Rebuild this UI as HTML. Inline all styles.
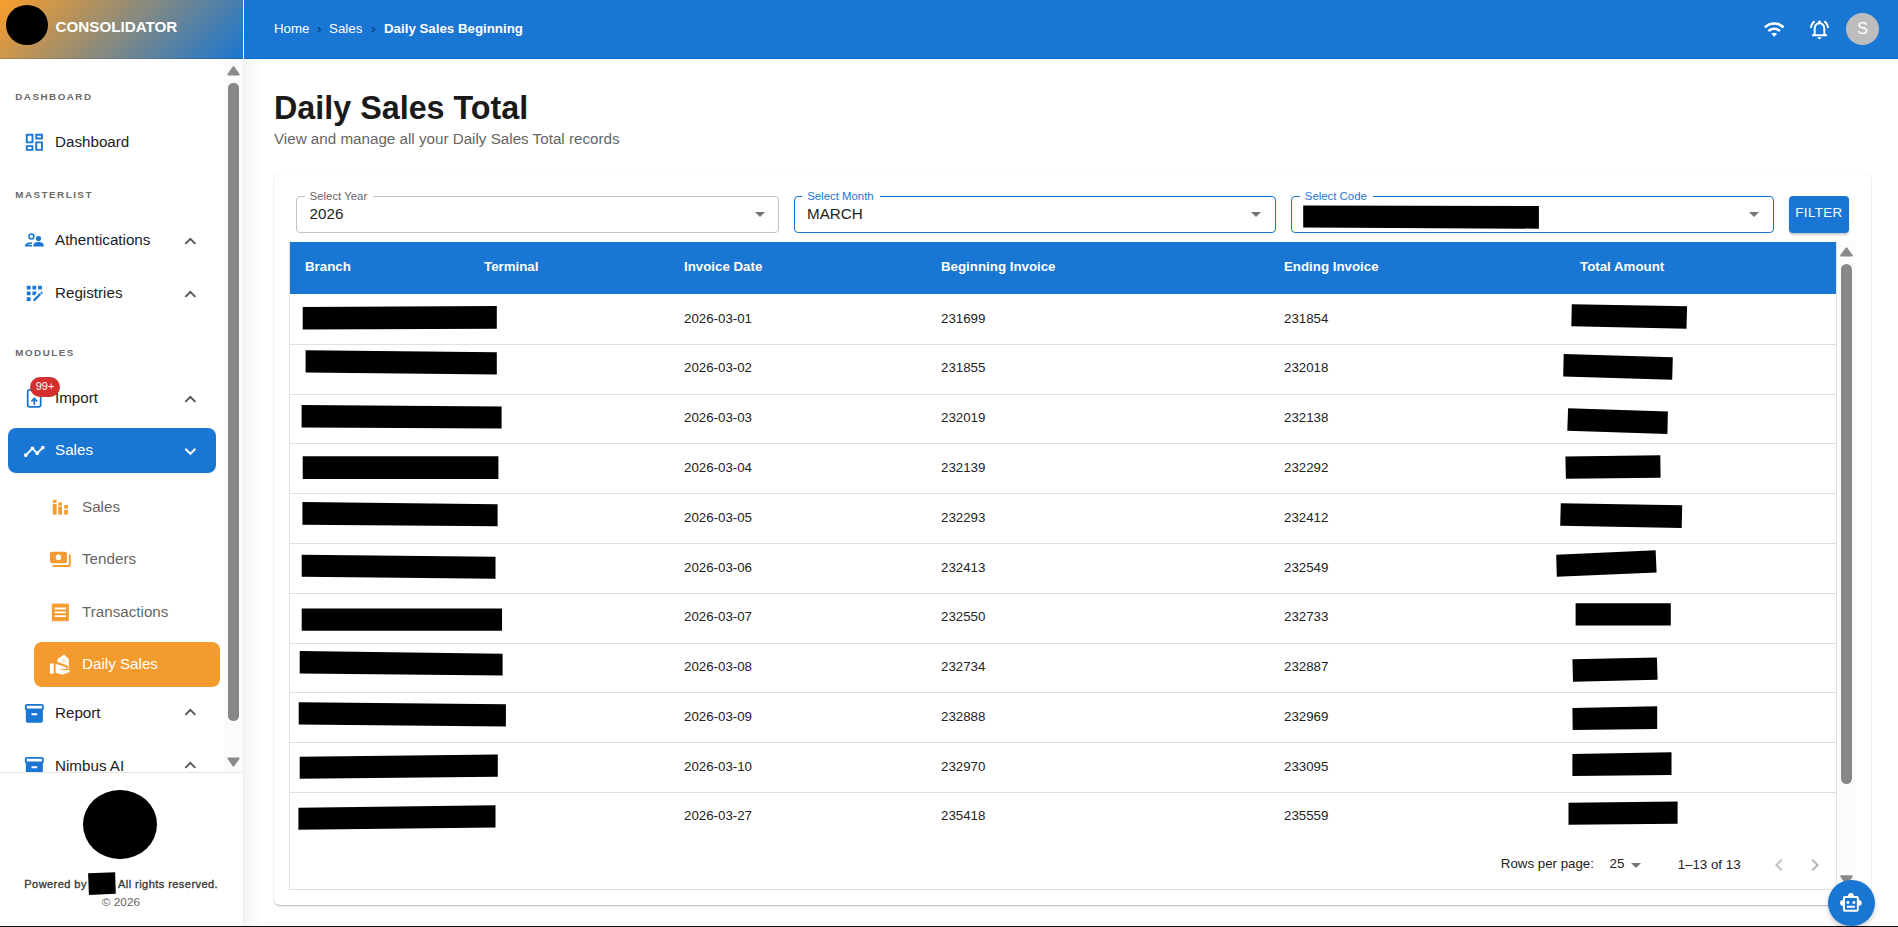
<!DOCTYPE html>
<html><head><meta charset="utf-8">
<style>
*{box-sizing:border-box;margin:0;padding:0}
html,body{width:1898px;height:927px;overflow:hidden;background:#fff;font-family:"Liberation Sans",sans-serif;color:#222}
.abs{position:absolute}
svg{display:block}
#sbhead{left:0;top:0;width:243px;height:59px;background:linear-gradient(135deg,#f89e2a 0%,#1976d2 100%);box-shadow:inset 0 -1px 0 rgba(0,0,0,.12)}
#topbar{left:244px;top:0;width:1654px;height:59px;background:#1976d2;box-shadow:inset 0 -1px 0 #0867cb}
#sbline{left:243px;top:0;width:1px;height:927px;background:#e6effa}
#sidebar{left:0;top:59px;width:243px;height:868px;background:#fff}
.lbl{position:absolute;left:15.3px;font-size:9.8px;font-weight:bold;letter-spacing:1.5px;color:#6a6a6a;line-height:12px}
.item{position:absolute;left:55px;font-size:15.2px;color:#222;line-height:18px;white-space:nowrap}
.sub{position:absolute;left:82px;font-size:15.2px;color:#666;line-height:18px;white-space:nowrap}
.ico{position:absolute;width:22.7px;height:22.7px}
.chev{position:absolute;left:179px;width:22.7px;height:22.7px}
#main{left:244px;top:59px;width:1654px;height:868px;background:linear-gradient(90deg,#f4f4f4 0,#fafafa 8px,#fff 18px)}
.hd{position:absolute;top:259.2px;font-size:13.3px;font-weight:bold;color:#fff;line-height:16px;white-space:nowrap}
.cell{position:absolute;font-size:13.3px;color:#222;line-height:16px;white-space:nowrap}
.hline{position:absolute;left:290px;width:1546px;height:1px;background:#e0e0e0}
.slbl{position:absolute;font-size:11.4px;line-height:13px;background:#fff;padding:0 6px 0 4.8px;white-space:nowrap}
.sval{position:absolute;font-size:15.2px;line-height:18px;color:#222}
.sel{position:absolute;top:196px;height:37px;border:1px solid #c4c4c4;border-radius:4px}
.arr{position:absolute;width:0;height:0;border-left:5px solid transparent;border-right:5px solid transparent;border-top:5px solid #757575}
</style></head><body>
<div class="abs" id="sidebar"></div>
<div class="abs" id="main"></div>
<div class="abs" id="sbhead"></div>
<div class="abs" id="topbar"></div>
<div class="abs" id="sbline"></div>

<!-- logo -->
<div class="abs" style="left:6px;top:5px;width:42px;height:40px;border-radius:50%;background:#000"></div>
<div class="abs" style="left:55.5px;top:18px;font-size:15.2px;font-weight:bold;color:#fff;line-height:18px">CONSOLIDATOR</div>

<!-- breadcrumb -->
<div class="abs" style="left:274px;top:20px;font-size:13.3px;color:#fff;line-height:17px;white-space:nowrap">Home<span style="color:#0d3460;margin:0 7.6px">›</span>Sales<span style="color:#0d3460;margin:0 8.4px 0 8.8px">›</span><b>Daily Sales Beginning</b></div>

<!-- top right icons -->
<svg class="abs" style="left:1762.6px;top:17.8px" width="22.4" height="22.4" viewBox="0 0 24 24" fill="#fff"><path d="M1 9l2 2c4.97-4.97 13.03-4.97 18 0l2-2C16.93 2.93 7.08 2.93 1 9zm8 8l3 3 3-3c-1.65-1.66-4.34-1.66-6 0zm-4-4l2 2c2.76-2.76 7.24-2.76 10 0l2-2C15.14 9.14 8.87 9.14 5 13z"/></svg>
<svg class="abs" style="left:1807.7px;top:17.6px" width="23" height="23" viewBox="0 0 24 24" fill="#fff"><path d="M18 16v-5c0-3.07-1.64-5.64-4.5-6.32V4c0-.83-.67-1.5-1.5-1.5s-1.5.67-1.5 1.5v.68C7.63 5.36 6 7.92 6 11v5l-2 2v1h16v-1l-2-2zm-2 1H8v-6c0-2.480 1.51-4.5 4-4.5s4 2.02 4 4.5v6zm-4 5c1.1 0 2-.9 2-2h-4c0 1.1.89 2 2 2zM7.58 4.08 6.17 2.670C3.77 4.5 2.19 7.32 2.05 10.5h2c.15-2.65 1.51-4.97 3.530-6.420zm12.37 6.420h2c-.15-3.18-1.730-6-4.12-7.83l-1.4 1.410c2 1.45 3.37 3.77 3.52 6.42z"/></svg>
<div class="abs" style="left:1846px;top:13px;width:33px;height:32px;border-radius:50%;background:#bdbdbd;color:#fff;font-size:16px;line-height:32px;text-align:center">S</div>

<!-- sidebar scrollbar -->
<div class="abs" style="left:224px;top:59px;width:19px;height:713px;background:#fbfbfb"></div>
<div class="abs" style="left:228px;top:83px;width:10.8px;height:637.5px;border-radius:5px;background:#888"></div>
<svg class="abs" style="left:220px;top:60px" width="26" height="20"><polygon points="233.5,7 238.8,14.6 228.3,14.6" transform="translate(-220,0)" fill="#8a8a8a" stroke="#8a8a8a" stroke-width="1.8" stroke-linejoin="round"/></svg>
<svg class="abs" style="left:220px;top:750px" width="26" height="20"><polygon points="228.3,8.3 238.8,8.3 233.5,15.8" transform="translate(-220,0)" fill="#8a8a8a" stroke="#8a8a8a" stroke-width="1.8" stroke-linejoin="round"/></svg>

<!-- sidebar labels -->
<div class="lbl" style="top:91px">DASHBOARD</div>
<div class="lbl" style="top:188.6px">MASTERLIST</div>
<div class="lbl" style="top:346.9px">MODULES</div>

<!-- Dashboard -->
<svg class="ico" style="left:23.1px;top:130.9px" viewBox="0 0 24 24" fill="#1976d2"><path d="M19 5v2h-4V5h4M9 5v6H5V5h4m10 8v6h-4v-6h4M9 17v2H5v-2h4M21 3h-8v6h8V3zM11 3H3v10h8V3zm10 8h-8v10h8V11zm-10 4H3v6h8v-6z"/></svg>
<div class="item" style="top:133px">Dashboard</div>

<!-- Athentications -->
<svg class="abs" style="left:0;top:0" width="60" height="260" fill="#1976d2">
 <circle cx="31.4" cy="236.6" r="2.5" fill="none" stroke="#1976d2" stroke-width="1.5"/>
 <circle cx="38.5" cy="238.6" r="2.6"/>
 <path d="M33.1 246.6 C33.3 242.5 36 242 38.5 242 C41 242 43.8 242.5 43.9 246.6 Z"/>
 <path d="M24.9 246.6 C25 243.5 27 242.2 32.7 242.2 L31 244.2 C28.5 244.2 27.8 244.6 27.5 245 L32.2 245 L32 246.6 Z"/>
</svg>
<div class="item" style="top:231px">Athentications</div>
<svg class="chev" style="top:229.8px" viewBox="0 0 24 24" fill="#555"><path d="M12 8l-6 6 1.41 1.41L12 10.83l4.59 4.58L18 14z"/></svg>

<!-- Registries -->
<svg class="ico" style="left:22.8px;top:282px" viewBox="0 0 24 24" fill="#1976d2"><path d="M10 4h4v4h-4zM4 16h4v4H4zm0-6h4v4H4zm0-6h4v4H4zm10 8.42V10h-4v4h2.42zm6.88-1.13-1.17-1.17c-.16-.16-.42-.16-.58 0l-.88.88L20 12.750l.88-.88c.16-.16.16-.42 0-.58zM11 18.25V20h1.75l6.67-6.67-1.75-1.75zM16 4h4v4h-4z"/></svg>
<div class="item" style="top:284px">Registries</div>
<svg class="chev" style="top:282.8px" viewBox="0 0 24 24" fill="#555"><path d="M12 8l-6 6 1.41 1.41L12 10.83l4.59 4.58L18 14z"/></svg>

<!-- Import -->
<svg class="abs" style="left:0;top:0" width="60" height="420">
 <rect x="27.7" y="389.9" width="13" height="16.9" rx="2" fill="none" stroke="#1976d2" stroke-width="1.8"/>
 <path d="M34.3 397.3 L37.8 400.8 L36.6 402 L35.2 400.6 L35.2 404.8 L33.4 404.8 L33.4 400.6 L32 402 L30.8 400.8 Z" fill="#1976d2"/>
</svg>
<div class="abs" style="left:30.1px;top:377.4px;width:30px;height:19.4px;border-radius:10px;background:#d32f2f;color:#fff;font-size:11px;line-height:19.4px;text-align:center">99+</div>
<div class="item" style="top:389px">Import</div>
<svg class="chev" style="top:387.8px" viewBox="0 0 24 24" fill="#555"><path d="M12 8l-6 6 1.41 1.41L12 10.83l4.59 4.58L18 14z"/></svg>

<!-- Sales active -->
<div class="abs" style="left:8.2px;top:428.1px;width:207.5px;height:44.7px;border-radius:8px;background:#1976d2"></div>
<svg class="ico" style="left:22.95px;top:440.2px" viewBox="0 0 24 24" fill="#fff"><path d="M23 8c0 1.1-.9 2-2 2-.18 0-.35-.02-.51-.07l-3.56 3.55c.05.16.07.34.07.52 0 1.1-.9 2-2 2s-2-.9-2-2c0-.18.02-.36.07-.52l-2.55-2.55c-.16.05-.34.07-.52.07s-.36-.02-.52-.07l-4.55 4.56c.05.16.07.33.07.51 0 1.1-.9 2-2 2s-2-.9-2-2 .9-2 2-2c.18 0 .35.02.51.07l4.56-4.55C8.02 9.36 8 9.18 8 9c0-1.1.9-2 2-2s2 .9 2 2c0 .18-.02.36-.07.52l2.55 2.55c.16-.05.34-.07.52-.07s.36.02.52.07l3.55-3.56C19.02 8.35 19 8.18 19 8c0-1.1.9-2 2-2s2 .9 2 2z"/></svg>
<div class="item" style="top:441px;color:#fff">Sales</div>
<svg class="chev" style="top:440px" viewBox="0 0 24 24" fill="#fff"><path d="M16.59 8.59 12 13.17 7.41 8.59 6 10l6 6 6-6z"/></svg>

<!-- sub items -->
<svg class="abs" style="left:0;top:0" width="80" height="530" fill="#f49b2f">
 <rect x="52.8" y="499.8" width="3.8" height="3"/><rect x="52.8" y="503.9" width="3.8" height="10.7"/>
 <rect x="58.3" y="502.4" width="3.7" height="3.3"/><rect x="58.3" y="506.6" width="3.7" height="8"/>
 <rect x="64.2" y="505" width="3.7" height="3.7"/><rect x="64.2" y="509.9" width="3.7" height="4.7"/>
</svg>
<div class="sub" style="top:498px">Sales</div>

<svg class="ico" style="left:49.1px;top:547.7px" viewBox="0 0 24 24" fill="#f49b2f"><path d="M19 14V6c0-1.1-.9-2-2-2H3c-1.1 0-2 .9-2 2v8c0 1.1.9 2 2 2h14c1.1 0 2-.9 2-2zm-9-1c-1.66 0-3-1.34-3-3s1.34-3 3-3 3 1.34 3 3-1.34 3-3 3zm13-6v11c0 1.1-.9 2-2 2H4v-2h17V7h2z"/></svg>
<div class="sub" style="top:550px">Tenders</div>

<svg class="ico" style="left:49px;top:600.5px" viewBox="0 0 24 24" fill="#f49b2f"><path d="M18 17H6v-2h12v2zm0-4H6v-2h12v2zm0-4H6V7h12v2zM3 22l1.5-1.5L6 22l1.5-1.5L9 22l1.5-1.5L12 22l1.5-1.5L15 22l1.5-1.5L18 22l1.5-1.5L21 22V2l-1.5 1.5L18 2l-1.5 1.5L15 2l-1.5 1.5L12 2l-1.5 1.5L9 2 7.5 3.5 6 2 4.5 3.5 3 2v20z"/></svg>
<div class="sub" style="top:603px">Transactions</div>

<div class="abs" style="left:34px;top:641.8px;width:186px;height:45px;border-radius:8px;background:#f49b2f"></div>
<svg class="ico" style="left:49px;top:652.5px" viewBox="0 0 24 24" fill="#fff"><path d="M21 18h-7l-2.09-.73.33-.94L14 17h2.82c.65 0 1.18-.53 1.18-1.18 0-.49-.31-.93-.77-1.11L8.97 12H7v9.02L14 23l8.01-3c-.01-1.1-.9-2-2.01-2zM5 11H.98v11H5V11zm11-9.5l-7 5V10h2l8.14 3.26c.67.26 1.110.9 1.11 1.62 0 .96-.78 1.74-1.74 1.74H16V17h5V6.5l-5-5zm-.5 8.5h-1V9h1v1zm0-2h-1V7h1v1zm2 2h-1V9h1v1zm0-2h-1V7h1v1z"/></svg>
<div class="sub" style="top:655px;color:#fff">Daily Sales</div>

<!-- Report -->
<svg class="ico" style="left:23.2px;top:702px" viewBox="0 0 24 24" fill="#1976d2"><path d="M20 2H4c-1 0-2 .9-2 2v3.01c0 .72.43 1.34 1 1.69V20c0 1.1 1.1 2 2 2h14c.9 0 2-.9 2-2V8.7c.57-.35 1-.97 1-1.69V4c0-1.1-1-2-2-2zm-5 12H9v-2h6v2zm5-7H4V4l16-.02V7z"/></svg>
<div class="item" style="top:704px">Report</div>
<svg class="chev" style="top:700.8px" viewBox="0 0 24 24" fill="#555"><path d="M12 8l-6 6 1.41 1.41L12 10.83l4.59 4.58L18 14z"/></svg>

<!-- Nimbus (clipped) -->
<div class="abs" style="left:0;top:740px;width:224px;height:32.5px;overflow:hidden">
<svg class="ico" style="left:23.2px;top:14.8px" viewBox="0 0 24 24" fill="#1976d2"><path d="M20 2H4c-1 0-2 .9-2 2v3.01c0 .72.43 1.34 1 1.69V20c0 1.1 1.1 2 2 2h14c.9 0 2-.9 2-2V8.7c.57-.35 1-.97 1-1.69V4c0-1.1-1-2-2-2zm-5 12H9v-2h6v2zm5-7H4V4l16-.02V7z"/></svg>
<div class="item" style="top:16.5px">Nimbus AI</div>
<svg class="chev" style="top:14px" viewBox="0 0 24 24" fill="#555"><path d="M12 8l-6 6 1.41 1.41L12 10.83l4.59 4.58L18 14z"/></svg>
</div>

<!-- sidebar footer -->
<div class="abs" style="left:0;top:772px;width:243px;height:155px;background:#fff;border-top:1px solid #e6e6e6"></div>
<div class="abs" style="left:83.1px;top:790px;width:73.6px;height:69.3px;border-radius:50%;background:#000"></div>
<div class="abs" style="left:24.3px;top:877.5px;font-size:11px;letter-spacing:0.45px;-webkit-text-stroke:0.35px #3a3a3a;color:#3a3a3a;line-height:13px;white-space:nowrap">Powered by</div>
<svg class="abs" style="left:0;top:860px" width="130" height="40"><polygon points="88.1,13.2 115.1,12.2 115.8,33.8 88.9,34.9"/></svg>
<div class="abs" style="left:118px;top:877.5px;font-size:11px;letter-spacing:0.45px;-webkit-text-stroke:0.35px #3a3a3a;color:#3a3a3a;line-height:13px;white-space:nowrap">All rights reserved.</div>
<div class="abs" style="left:101.8px;top:895.5px;font-size:11.8px;color:#666;line-height:13px;white-space:nowrap">© 2026</div>

<!-- title -->
<div class="abs" style="left:274px;top:90px;font-size:32.3px;font-weight:bold;color:#1a1a1a;line-height:37px">Daily Sales Total</div>
<div class="abs" style="left:274px;top:130px;font-size:15.2px;color:#666;line-height:17px">View and manage all your Daily Sales Total records</div>

<!-- card -->
<div class="abs" style="left:274px;top:172.5px;width:1597px;height:732.5px;background:#fff;border-radius:6px;box-shadow:0 1px 1.5px rgba(0,0,0,.28),0 0 1px rgba(0,0,0,.08)"></div>

<!-- selects -->
<div class="sel" style="left:296.2px;width:482.4px"></div>
<div class="slbl" style="left:304.8px;top:189.5px;color:#666">Select Year</div>
<div class="sval" style="left:309.6px;top:205px">2026</div>
<div class="arr" style="left:754.6px;top:212px"></div>

<div class="sel" style="left:794.3px;width:481.7px;border-color:#1976d2"></div>
<div class="slbl" style="left:802.4px;top:189.5px;color:#1976d2">Select Month</div>
<div class="sval" style="left:807px;top:205px">MARCH</div>
<div class="arr" style="left:1251px;top:212px"></div>

<div class="sel" style="left:1291.4px;width:482.4px;border-color:#1976d2"></div>
<div class="slbl" style="left:1300px;top:189.5px;color:#1976d2">Select Code</div>
<div class="arr" style="left:1748.5px;top:212px"></div>

<div class="abs" style="left:1789px;top:196.3px;width:59.8px;height:36.5px;border-radius:4px;background:#1976d2;box-shadow:0 2px 2px rgba(0,0,0,.2);color:#fff;font-size:13.3px;letter-spacing:0.4px;line-height:34.5px;text-align:center">FILTER</div>

<!-- table -->
<div class="abs" style="left:289px;top:241.5px;width:1548px;height:648.5px;border:1px solid #e0e0e0;border-top:0"></div>
<div class="abs" style="left:290px;top:242px;width:1546px;height:51.6px;background:#1976d2"></div>
<div class="hd" style="left:305px">Branch</div>
<div class="hd" style="left:484px">Terminal</div>
<div class="hd" style="left:684px">Invoice Date</div>
<div class="hd" style="left:941px">Beginning Invoice</div>
<div class="hd" style="left:1284px">Ending Invoice</div>
<div class="hd" style="left:1580px">Total Amount</div>
<div class="hline" style="top:343.8px"></div>
<div class="hline" style="top:393.6px"></div>
<div class="hline" style="top:443.4px"></div>
<div class="hline" style="top:493.2px"></div>
<div class="hline" style="top:543.0px"></div>
<div class="hline" style="top:592.8px"></div>
<div class="hline" style="top:642.5px"></div>
<div class="hline" style="top:692.3px"></div>
<div class="hline" style="top:742.1px"></div>
<div class="hline" style="top:791.9px"></div>
<div class="cell" style="left:684px;top:310.5px">2026-03-01</div>
<div class="cell" style="left:941px;top:310.5px">231699</div>
<div class="cell" style="left:1284px;top:310.5px">231854</div>
<div class="cell" style="left:684px;top:360.3px">2026-03-02</div>
<div class="cell" style="left:941px;top:360.3px">231855</div>
<div class="cell" style="left:1284px;top:360.3px">232018</div>
<div class="cell" style="left:684px;top:410.1px">2026-03-03</div>
<div class="cell" style="left:941px;top:410.1px">232019</div>
<div class="cell" style="left:1284px;top:410.1px">232138</div>
<div class="cell" style="left:684px;top:459.9px">2026-03-04</div>
<div class="cell" style="left:941px;top:459.9px">232139</div>
<div class="cell" style="left:1284px;top:459.9px">232292</div>
<div class="cell" style="left:684px;top:509.7px">2026-03-05</div>
<div class="cell" style="left:941px;top:509.7px">232293</div>
<div class="cell" style="left:1284px;top:509.7px">232412</div>
<div class="cell" style="left:684px;top:559.5px">2026-03-06</div>
<div class="cell" style="left:941px;top:559.5px">232413</div>
<div class="cell" style="left:1284px;top:559.5px">232549</div>
<div class="cell" style="left:684px;top:609.2px">2026-03-07</div>
<div class="cell" style="left:941px;top:609.2px">232550</div>
<div class="cell" style="left:1284px;top:609.2px">232733</div>
<div class="cell" style="left:684px;top:659.0px">2026-03-08</div>
<div class="cell" style="left:941px;top:659.0px">232734</div>
<div class="cell" style="left:1284px;top:659.0px">232887</div>
<div class="cell" style="left:684px;top:708.8px">2026-03-09</div>
<div class="cell" style="left:941px;top:708.8px">232888</div>
<div class="cell" style="left:1284px;top:708.8px">232969</div>
<div class="cell" style="left:684px;top:758.6px">2026-03-10</div>
<div class="cell" style="left:941px;top:758.6px">232970</div>
<div class="cell" style="left:1284px;top:758.6px">233095</div>
<div class="cell" style="left:684px;top:808.4px">2026-03-27</div>
<div class="cell" style="left:941px;top:808.4px">235418</div>
<div class="cell" style="left:1284px;top:808.4px">235559</div>

<!-- table scrollbar -->
<div class="abs" style="left:1836.5px;top:241px;width:19.5px;height:645px;background:#fcfcfc"></div>
<div class="abs" style="left:1841px;top:264px;width:11px;height:519.6px;border-radius:5.5px;background:#888"></div>
<svg class="abs" style="left:1830px;top:240px" width="30" height="20"><polygon points="16.5,8.2 21.9,15.5 11.1,15.5" fill="#8a8a8a" stroke="#8a8a8a" stroke-width="1.8" stroke-linejoin="round"/></svg>
<svg class="abs" style="left:1830px;top:870px" width="30" height="20"><polygon points="11.1,6.2 21.9,6.2 16.5,13.8" fill="#8a8a8a" stroke="#8a8a8a" stroke-width="1.8" stroke-linejoin="round"/></svg>

<!-- pagination -->
<div class="cell" style="left:1500.8px;top:856.2px">Rows per page:</div>
<div class="cell" style="left:1609.6px;top:856px">25</div>
<div class="arr" style="left:1630.6px;top:862.8px"></div>
<div class="cell" style="left:1677.7px;top:856.5px">1–13 of 13</div>
<svg class="abs" style="left:1766.5px;top:853px" width="24" height="24" viewBox="0 0 24 24" fill="#c2c2c2"><path d="M15.41 7.41 14 6l-6 6 6 6 1.41-1.41L10.83 12z"/></svg>
<svg class="abs" style="left:1803px;top:853px" width="24" height="24" viewBox="0 0 24 24" fill="#b5b5b5"><path d="M10 6 8.59 7.41 13.17 12l-4.58 4.59L10 18l6-6z"/></svg>

<svg class="abs" style="left:0;top:0" width="1898" height="927"><polygon points="302.7,307.1 496.8,306.1 496.8,328.7 302.7,329.5"/><polygon points="305.6,350.3 496.8,352.2 496.8,374.5 305.6,372.6"/><polygon points="301.6,405.0 501.6,406.4 501.6,428.5 301.6,427.6"/><polygon points="302.7,456.2 498.4,456.2 498.4,478.9 302.7,478.9"/><polygon points="302.4,502.0 497.6,504.2 497.6,526.3 302.4,524.7"/><polygon points="301.7,554.7 495.5,556.7 495.5,578.7 301.7,576.7"/><polygon points="301.7,608.4 502.0,608.4 502.0,630.8 301.7,630.8"/><polygon points="299.7,651.1 502.6,653.7 502.6,675.4 299.7,673.5"/><polygon points="298.7,702.3 505.9,704.2 505.9,726.6 298.7,724.6"/><polygon points="299.7,756.7 497.8,754.4 497.8,776.7 299.7,778.7"/><polygon points="298.4,807.8 495.5,805.2 495.5,827.5 298.4,829.8"/><polygon points="1571.8,304.2 1687.1,306.3 1686.5,328.7 1571.3,326.3"/><polygon points="1563.7,354.1 1672.8,357.3 1672.2,379.7 1563.2,376.5"/><polygon points="1568.1,408.3 1667.9,411.6 1667.4,434.0 1567.3,430.7"/><polygon points="1565.4,456.4 1660.3,455.3 1660.6,477.7 1565.9,478.8"/><polygon points="1560.8,503.3 1682.2,505.2 1681.7,527.9 1560.2,525.7"/><polygon points="1556.2,554.7 1655.6,550.2 1656.6,572.5 1556.8,576.7"/><polygon points="1575.6,603.3 1670.8,603.3 1670.8,625.6 1575.6,625.6"/><polygon points="1572.4,659.3 1656.9,657.4 1657.6,679.7 1573.0,681.7"/><polygon points="1572.4,707.9 1657.2,706.3 1657.2,728.9 1572.7,729.9"/><polygon points="1572.4,753.9 1671.5,752.3 1671.5,774.9 1572.4,775.9"/><polygon points="1568.5,802.8 1677.6,801.5 1677.6,823.8 1568.5,824.8"/><polygon points="1303.2,205.4 1538.9,206.1 1538.9,228.7 1303.2,227.5"/></svg>

<!-- FAB -->
<div class="abs" style="left:1828px;top:879.7px;width:46.8px;height:46.8px;border-radius:50%;background:#1976d2;box-shadow:0 3px 5px rgba(0,0,0,.2)"></div>
<svg class="abs" style="left:1839.2px;top:891.3px" width="23.8" height="23.8" viewBox="0 0 24 24" fill="#fff"><path d="M20 9V7c0-1.1-.9-2-2-2h-3c0-1.66-1.34-3-3-3S9 3.34 9 5H6c-1.1 0-2 .9-2 2v2c-1.66 0-3 1.34-3 3s1.34 3 3 3v4c0 1.1.9 2 2 2h12c1.1 0 2-.9 2-2v-4c1.66 0 3-1.34 3-3s-1.34-3-3-3zm-2 10H6V7h12v12zm-9-6c-.83 0-1.5-.67-1.5-1.5S8.17 10 9 10s1.5.67 1.5 1.5S9.83 13 9 13zm7.5-1.5c0 .83-.67 1.5-1.5 1.5s-1.5-.67-1.5-1.5.67-1.5 1.5-1.5 1.5.67 1.5 1.5zM8 15h8v2H8v-2z"/></svg>

<!-- bottom line -->
<div class="abs" style="left:0;top:926px;width:1898px;height:1px;background:#0a0a0a"></div>
</body></html>
